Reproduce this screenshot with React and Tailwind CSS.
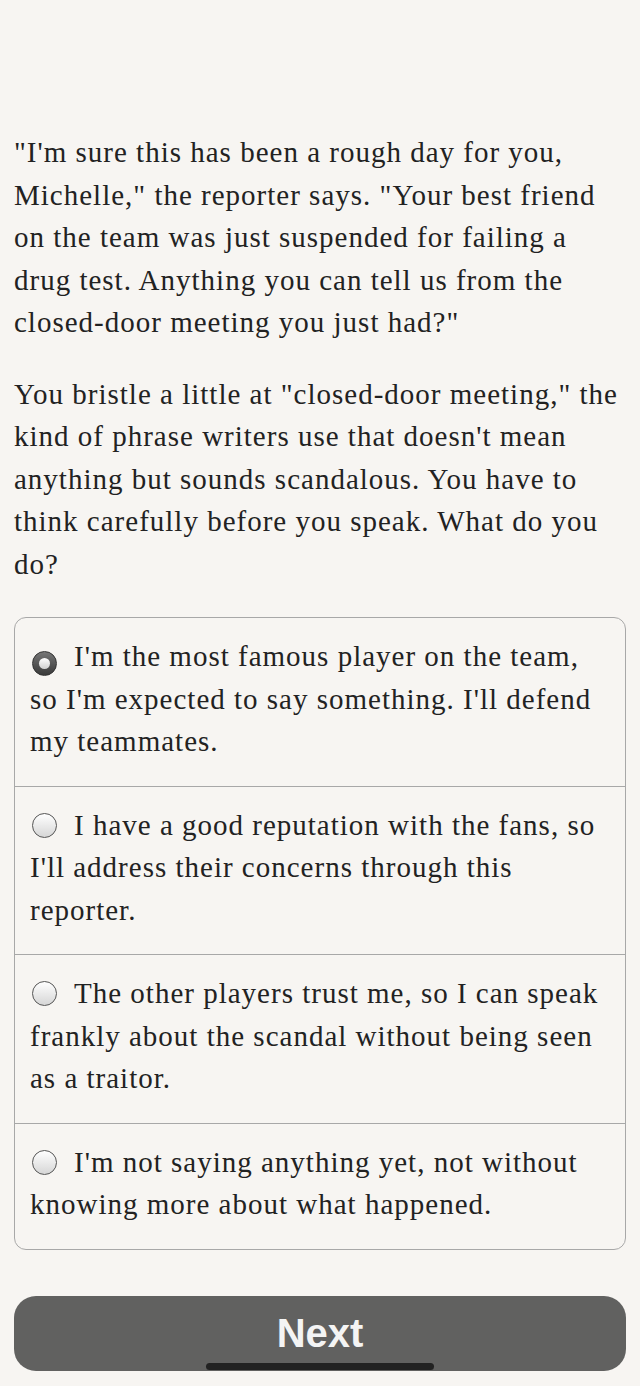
import { useState } from 'react'

const intro = [
  '"I\'m sure this has been a rough day for you,',
  'Michelle," the reporter says. "Your best friend',
  'on the team was just suspended for failing a',
  'drug test. Anything you can tell us from the',
  'closed-door meeting you just had?"',
]

const prompt = [
  'You bristle a little at "closed-door meeting," the',
  "kind of phrase writers use that doesn't mean",
  'anything but sounds scandalous. You have to',
  'think carefully before you speak. What do you',
  'do?',
]

const choices = [
  ["I'm the most famous player on the team,", "so I'm expected to say something. I'll defend", 'my teammates.'],
  ['I have a good reputation with the fans, so', "I'll address their concerns through this", 'reporter.'],
  ['The other players trust me, so I can speak', 'frankly about the scandal without being seen', 'as a traitor.'],
  ["I'm not saying anything yet, not without", 'knowing more about what happened.'],
]

function Lines({ lines }) {
  return lines.map((l, i) => (
    <span key={i} className="block whitespace-nowrap">
      {l}
    </span>
  ))
}

function Radio({ checked }) {
  if (checked) {
    return (
      <span className="inline-flex w-[25px] h-[25px] rounded-full border-[1.5px] border-[#333] bg-gradient-to-b from-[#777] to-[#3a3a3a] items-center justify-center align-[-3px] ml-[2px] mr-[17px]">
        <span className="w-[11px] h-[11px] rounded-full bg-gradient-to-b from-[#ffffff] to-[#d0d0d0]" />
      </span>
    )
  }
  return (
    <span className="inline-block w-[25px] h-[25px] rounded-full border-[1.5px] border-[#555] bg-gradient-to-b from-[#ffffff] to-[#d6d6d6] align-[-3px] ml-[2px] mr-[17px]" />
  )
}

export default function App() {
  const [selected, setSelected] = useState(0)

  return (
    <div className="min-h-[1386px] bg-[#f7f5f2] relative overflow-hidden font-['Liberation_Serif',serif] text-[#222]">
      <div className="px-[14px] pt-[131px] text-[29px] leading-[42.5px] tracking-[1px]">
        {/* Story text */}
        <p>
          <Lines lines={intro} />
        </p>
        <p className="mt-[29px]">
          <Lines lines={prompt} />
        </p>

        {/* Choices */}
        <div className="mt-[32px] border border-[#a8a8a8] rounded-[12px] overflow-hidden">
          {choices.map((c, i) => (
            <div
              key={i}
              onClick={() => setSelected(i)}
              className={`px-[15px] pt-[17px] pb-[23px] cursor-pointer ${i > 0 ? 'border-t border-[#a8a8a8]' : ''}`}
            >
              <span className="block whitespace-nowrap">
                <Radio checked={selected === i} />
                {c[0]}
              </span>
              <Lines lines={c.slice(1)} />
            </div>
          ))}
        </div>

        {/* Next button */}
        <button className="mt-[46px] w-full h-[75px] rounded-[22px] bg-[#616160] text-[#f4f4f4] font-['Liberation_Sans',sans-serif] font-bold text-[40px] leading-none tracking-normal">
          Next
        </button>
      </div>

      {/* Home indicator */}
      <div className="absolute left-[206px] top-[1363px] w-[228px] h-[7px] rounded-full bg-[#222]" />
    </div>
  )
}
